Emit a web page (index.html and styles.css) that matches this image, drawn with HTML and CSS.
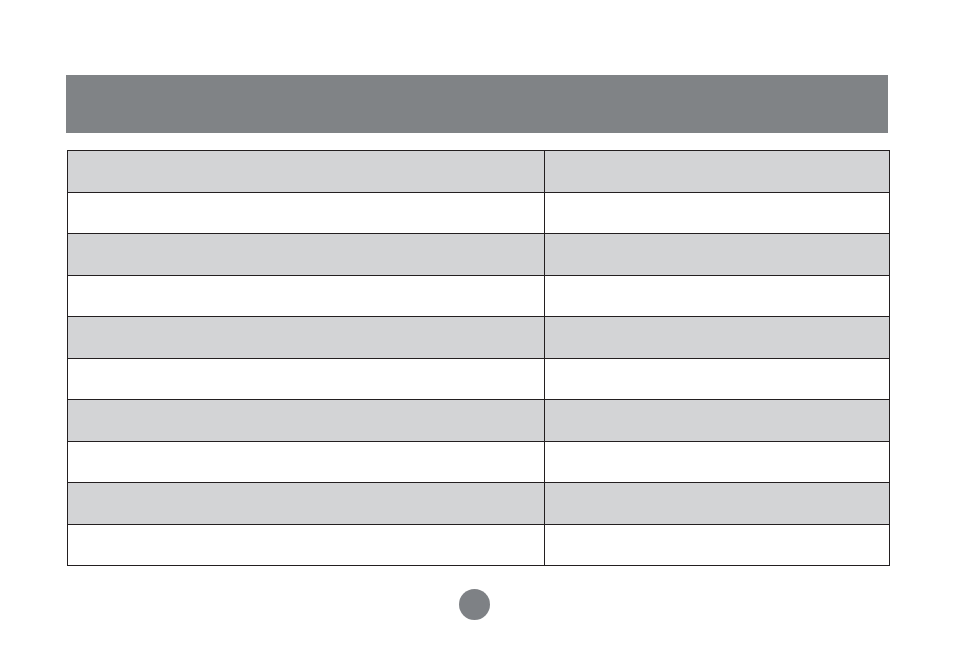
FILE: index.html
```html
<!DOCTYPE html>
<html>
<head>
<meta charset="utf-8">
<link rel="stylesheet" href="styles.css">
</head>
<body>
<div class="page">
  <div class="banner"></div>
  <div class="grid">
    <div class="cell shade wide"></div><div class="cell shade"></div>
    <div class="cell wide"></div><div class="cell"></div>
    <div class="cell shade wide"></div><div class="cell shade"></div>
    <div class="cell wide"></div><div class="cell"></div>
    <div class="cell shade wide"></div><div class="cell shade"></div>
    <div class="cell wide"></div><div class="cell"></div>
    <div class="cell shade wide"></div><div class="cell shade"></div>
    <div class="cell wide"></div><div class="cell"></div>
    <div class="cell shade wide"></div><div class="cell shade"></div>
    <div class="cell wide"></div><div class="cell"></div>
  </div>
  <div class="pager"><span class="dot"></span></div>
</div>
</body>
</html>
```
FILE: styles.css
```css
html, body {
  margin: 0;
  padding: 0;
  background: #ffffff;
  font-family: "Liberation Sans", Arial, sans-serif;
}
.page {
  width: 954px;
  height: 665px;
  display: flex;
  flex-direction: column;
  padding-top: 75px;
  box-sizing: border-box;
}
.banner {
  margin-left: 66px;
  width: 822px;
  height: 58px;
  background: #808386;
}
.grid {
  margin-top: 17px;
  margin-left: 67px;
  width: 823px;
  box-sizing: border-box;
  display: grid;
  grid-template-columns: 477px 1fr;
  grid-auto-rows: 41.5px;
  border-top: 1.5px solid #231f20;
  border-left: 1.5px solid #231f20;
}
.cell {
  border-right: 1.5px solid #231f20;
  border-bottom: 1.5px solid #231f20;
  background: #ffffff;
}
.cell.shade {
  background: #d3d4d6;
}
.pager {
  display: flex;
  justify-content: center;
  margin-top: 23px;
  padding-left: 0;
  width: 949px;
}
.dot {
  width: 31px;
  height: 31px;
  border-radius: 50%;
  background: #7e8185;
}
```
